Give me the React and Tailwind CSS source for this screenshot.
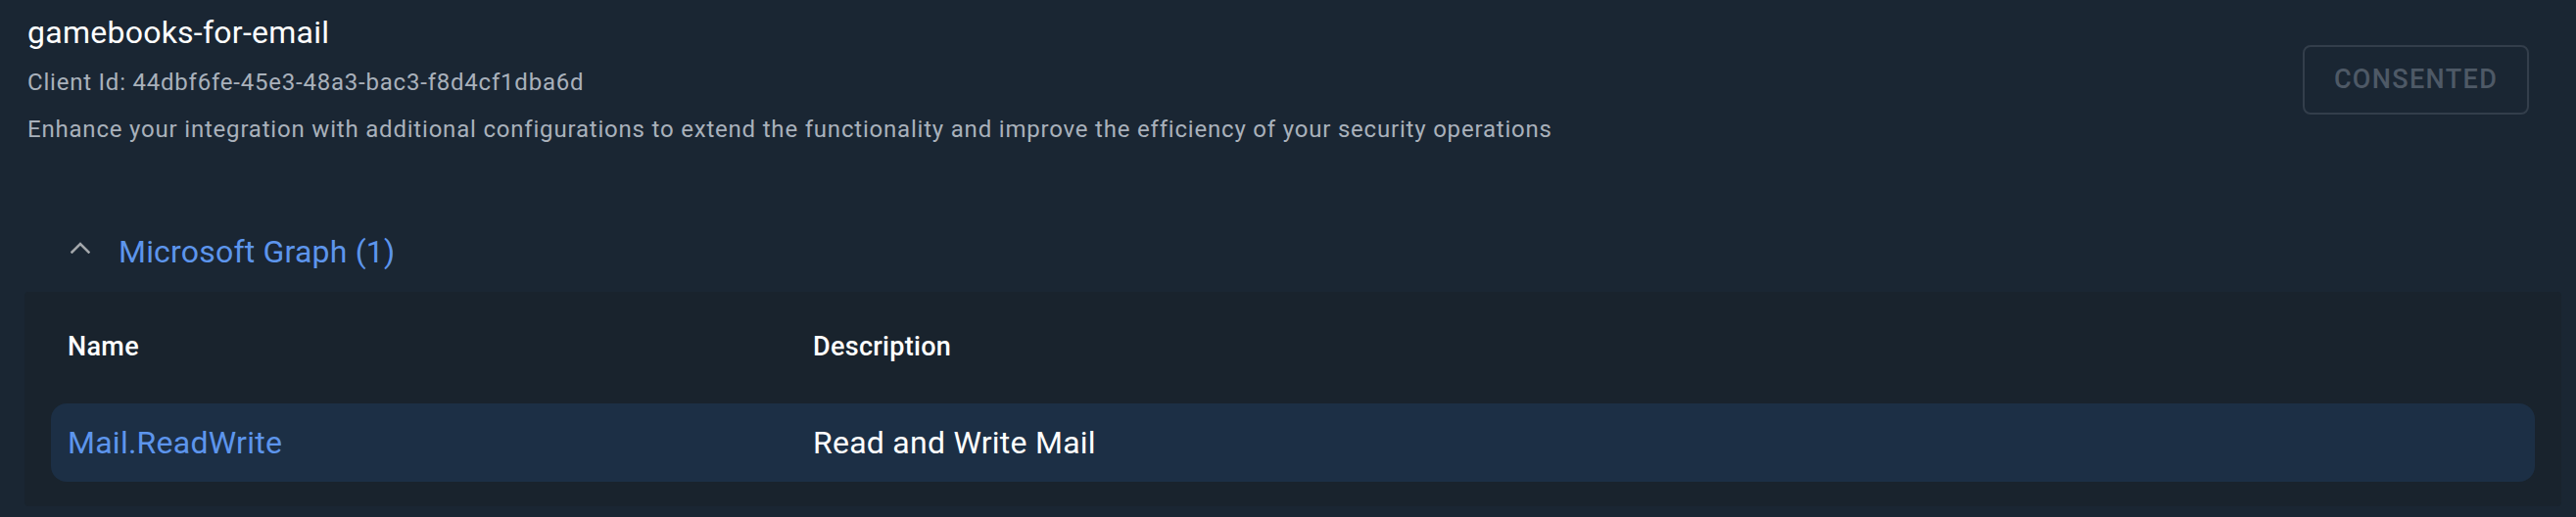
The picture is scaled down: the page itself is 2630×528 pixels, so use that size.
import React from "react"

const permissions = [{ name: "Mail.ReadWrite", description: "Read and Write Mail" }]

const ChevronUp = () => (
  <svg width="20" height="12" viewBox="0 0 20 12" fill="none" className="mt-[-8px]">
    <polyline points="1.5,10.5 10,2 18.5,10.5" stroke="#a3a7ab" strokeWidth="2.6" strokeLinecap="square" />
  </svg>
)

const App = () => {
  return (
    <div className="min-h-screen w-full bg-[#1a2633] font-['Roboto',sans-serif]">
      <div className="flex items-start justify-between">
        <div className="pl-[28px] pt-[9px]">
          <h1 className="text-[32px] leading-[48px] tracking-[0.25px] text-white">gamebooks-for-email</h1>
          <p className="mt-[9px] text-[24px] leading-[36px] tracking-[0.78px] text-[#a9b1bb]">
            Client Id: 44dbf6fe-45e3-48a3-bac3-f8d4cf1dba6d
          </p>
          <p className="mt-[12px] text-[24px] leading-[36px] tracking-[0.8px] text-[#a9b1bb]">
            Enhance your integration with additional configurations to extend the functionality and improve the efficiency of your security operations
          </p>
        </div>
        <button className="mr-[48px] mt-[46px] flex h-[71px] w-[231px] items-center justify-center rounded-[8px] border-2 border-[#333e4b] text-[27px] font-medium uppercase tracking-[0.05em] text-[#4e5966]">
          Consented
        </button>
      </div>

      <div className="mt-[75px] flex h-[64px] items-center pl-[72px]">
        <ChevronUp />
        <span className="ml-[29px] text-[32px] tracking-[0.2px] text-[#5d95ec]">Microsoft Graph (1)</span>
      </div>

      <div className="ml-[25px] mr-[15px] mt-[9px] rounded-[4px] bg-[#19232d] px-[27px] pb-[25px] pt-[10px]">
        <div className="grid h-[92px] grid-cols-[761px_1fr] items-center px-[17px] text-[27px] font-medium tracking-[0.3px] text-white">
          <div>Name</div>
          <div>Description</div>
        </div>
        <div className="mt-[12px]">
          {permissions.map((p) => (
            <div
              key={p.name}
              className="grid h-[80px] grid-cols-[761px_1fr] items-center rounded-[16px] bg-[#1c2f45] px-[17px] text-[32px] tracking-[0.25px]"
            >
              <div className="text-[#5d95ec]">{p.name}</div>
              <div className="text-white">{p.description}</div>
            </div>
          ))}
        </div>
      </div>
    </div>
  )
}

export default App
